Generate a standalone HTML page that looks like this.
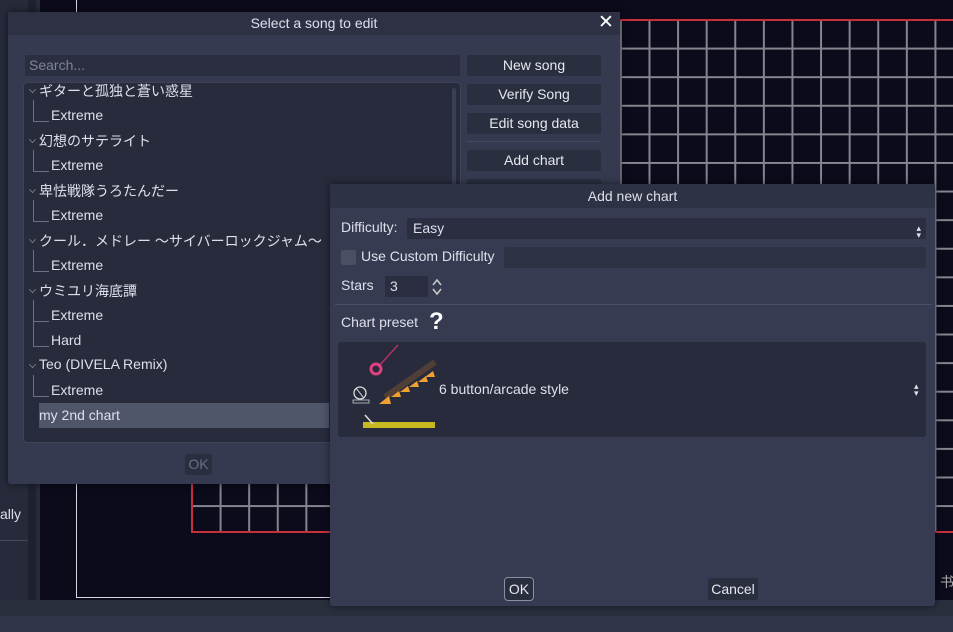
<!DOCTYPE html>
<html><head><meta charset="utf-8"><style>
*{box-sizing:border-box;margin:0;padding:0}
body{width:953px;height:632px;overflow:hidden;background:#0c0b1c;font-family:"Liberation Sans","Noto Sans CJK JP",sans-serif;font-size:14px;color:#dde0ea;position:relative}
.a{position:absolute}
.btn{position:absolute;background:#2a2f40;color:#e6e8ee;text-align:center;border-radius:2px;font-size:14px}
.grid{left:191px;top:19px;width:800px;height:514px;border:2px solid #c8303a;border-right:none;
background-image:linear-gradient(to right,#85858f 2px,transparent 2px),linear-gradient(to bottom,#85858f 2px,transparent 2px);
background-size:28.6px 28.6px;background-position:-2px -2px}
.li{position:absolute;left:51px;font-size:14px}
.hd{position:absolute;left:39px;font-size:14px}
.cv{position:absolute;left:29px;width:7px;height:7px;border-right:1.5px solid #8a90a0;border-bottom:1.5px solid #8a90a0;transform:rotate(45deg) scale(.7)}
.ln{position:absolute;left:33px;width:1px;background:#6a7080}
.lh{position:absolute;left:33px;height:1px;width:16px;background:#6a7080}
</style></head><body>
<div class="a" style="left:0;top:0;width:40px;height:600px;background:#262a3a"></div>
<div class="a" style="left:28px;top:0;width:8px;height:600px;background:#1e2230"></div>
<div class="a" style="left:0;top:506px;font-size:14px">ally</div>
<div class="a" style="left:0;top:540px;width:28px;height:1px;background:#444a5c"></div>
<div class="a" style="left:76px;top:0;width:1px;height:598px;background:#d8d8e0"></div>
<div class="a" style="left:76px;top:597px;width:300px;height:1px;background:#d8d8e0"></div>
<div class="a grid"></div>
<div class="a" style="left:940px;top:572px;color:#aaa">书</div>
<div class="a" style="left:0;top:600px;width:953px;height:32px;background:#2a2f3e"></div>
<div class="a" style="left:0;top:616px;width:953px;height:16px;background:#30354a"></div>

<div class="a" style="left:8px;top:12px;width:612px;height:472px;background:#353a50;border-radius:3px;box-shadow:0 0 8px rgba(0,0,0,.5)"></div>
<div class="a" style="left:8px;top:12px;width:612px;height:23px;background:#2d3143;text-align:center;line-height:22px">Select a song to edit</div>
<div class="a" style="left:598px;top:11px;font-size:19px;color:#fff">✕</div>
<div class="a" style="left:25px;top:55px;width:435px;height:21px;background:#2a2e40;border-radius:2px;color:#7e8496;padding-left:4px;line-height:21px">Search...</div>
<div class="a" style="left:23px;top:82px;width:438px;height:361px;background:#272b3c;border:1px solid #3e4356;border-radius:4px"></div>
<div class="a" style="left:452px;top:88px;width:4px;height:350px;background:#3a3f52;border-radius:2px"></div>
<div class="cv" style="top:86px"></div><div class="hd" style="top:81px">ギターと孤独と蒼い惑星</div>
<div class="li" style="top:107px">Extreme</div>
<div class="cv" style="top:136px"></div><div class="hd" style="top:131px">幻想のサテライト</div>
<div class="li" style="top:157px">Extreme</div>
<div class="cv" style="top:186px"></div><div class="hd" style="top:181px">卑怯戦隊うろたんだー</div>
<div class="li" style="top:207px">Extreme</div>
<div class="cv" style="top:236px"></div><div class="hd" style="top:231px">クール．メドレー ～サイバーロックジャム～</div>
<div class="li" style="top:257px">Extreme</div>
<div class="cv" style="top:286px"></div><div class="hd" style="top:281px">ウミユリ海底譚</div>
<div class="li" style="top:307px">Extreme</div>
<div class="li" style="top:332px">Hard</div>
<div class="cv" style="top:361px"></div><div class="hd" style="top:356px">Teo (DIVELA Remix)</div>
<div class="li" style="top:382px">Extreme</div>
<div class="ln" style="top:100px;height:22px"></div><div class="lh" style="top:121px"></div>
<div class="ln" style="top:150px;height:22px"></div><div class="lh" style="top:171px"></div>
<div class="ln" style="top:200px;height:22px"></div><div class="lh" style="top:221px"></div>
<div class="ln" style="top:250px;height:22px"></div><div class="lh" style="top:271px"></div>
<div class="ln" style="top:300px;height:47px"></div><div class="lh" style="top:321px"></div><div class="lh" style="top:346px"></div>
<div class="ln" style="top:375px;height:22px"></div><div class="lh" style="top:396px"></div>
<div class="a" style="left:39px;top:403px;width:290px;height:25px;background:#50566a;line-height:25px">my 2nd chart</div>
<div class="btn" style="left:467px;top:55px;width:134px;height:21px;line-height:21px">New song</div>
<div class="btn" style="left:467px;top:84px;width:134px;height:21px;line-height:21px">Verify Song</div>
<div class="btn" style="left:467px;top:113px;width:134px;height:21px;line-height:21px">Edit song data</div>
<div class="a" style="left:467px;top:141px;width:134px;height:1px;background:#454a5e"></div>
<div class="btn" style="left:467px;top:150px;width:134px;height:21px;line-height:21px">Add chart</div>
<div class="btn" style="left:467px;top:179px;width:134px;height:21px"></div>
<div class="btn" style="left:185px;top:454px;width:27px;height:21px;line-height:21px;color:#6b7080">OK</div>

<div class="a" style="left:330px;top:184px;width:605px;height:422px;background:#363b52;border-radius:3px;box-shadow:0 0 8px rgba(0,0,0,.5)"></div>
<div class="a" style="left:330px;top:184px;width:605px;height:24px;background:#2e3245;text-align:center;line-height:24px">Add new chart</div>
<div class="a" style="left:341px;top:219px">Difficulty:</div>
<div class="a" style="left:407px;top:218px;width:519px;height:21px;background:#2a2e40;border-radius:2px;line-height:21px;padding-left:6px">Easy<span style="position:absolute;right:5px;font-size:9px;top:0">▴</span><span style="position:absolute;right:5px;font-size:9px;top:7px">▾</span></div>
<div class="a" style="left:341px;top:250px;width:15px;height:15px;background:#4a5064;border-radius:2px"></div>
<div class="a" style="left:361px;top:248px">Use Custom Difficulty</div>
<div class="a" style="left:504px;top:247px;width:422px;height:21px;background:#2c3143;border-radius:2px"></div>
<div class="a" style="left:341px;top:277px">Stars</div>
<div class="a" style="left:385px;top:276px;width:43px;height:21px;background:#2a2e40;border-radius:2px;line-height:21px;padding-left:5px">3</div>
<svg class="a" style="left:431px;top:278px" width="12" height="18"><path d="M2 7 L6 2 L10 7 M2 11 L6 16 L10 11" fill="none" stroke="#ccc" stroke-width="1.5"/></svg>
<div class="a" style="left:335px;top:304px;width:597px;height:1px;background:#4a5064"></div>
<div class="a" style="left:341px;top:314px">Chart preset</div>
<div class="a" style="left:429px;top:308px;font-size:24px;font-weight:bold;color:#fff">?</div>
<div class="a" style="left:338px;top:342px;width:588px;height:95px;background:#272b3c;border-radius:3px"></div>
<svg class="a" style="left:345px;top:342px" width="100" height="95">
<line x1="33" y1="25" x2="53" y2="3" stroke="#b0306a" stroke-width="1.5"/>
<circle cx="31" cy="27" r="5" fill="none" stroke="#e04080" stroke-width="3"/>
<line x1="40" y1="55" x2="90" y2="20" stroke="#5a4535" stroke-width="6" opacity=".8"/>
<g fill="#f0a030"><polygon points="34,62 44,54 46,62"/><polygon points="46,55 54,49 56,55"/><polygon points="55,50 63,44 65,50"/><polygon points="64,45 72,39 74,45"/><polygon points="73,40 81,34 83,40"/><polygon points="80,35 88,29 90,35"/></g>
<circle cx="15" cy="51" r="6" fill="none" stroke="#ddd" stroke-width="1.3"/><line x1="11" y1="46" x2="18" y2="55" stroke="#ddd"/>
<rect x="8" y="58" width="16" height="3" fill="none" stroke="#ccc" stroke-width=".8"/>
<rect x="18" y="80" width="72" height="6" fill="#c8b820"/><line x1="20" y1="73" x2="28" y2="82" stroke="#ddd" stroke-width="1.5"/>
</svg>
<div class="a" style="left:439px;top:381px">6 button/arcade style</div>
<div class="a" style="left:914px;top:383px;font-size:9px;line-height:7px">▴<br>▾</div>
<div class="btn" style="left:504px;top:577px;width:30px;height:24px;line-height:22px;border:1px solid #8890a4;border-radius:4px;background:#2a2f40">OK</div>
<div class="btn" style="left:708px;top:578px;width:50px;height:22px;line-height:22px;background:#2a2f40">Cancel</div>
</body></html>
